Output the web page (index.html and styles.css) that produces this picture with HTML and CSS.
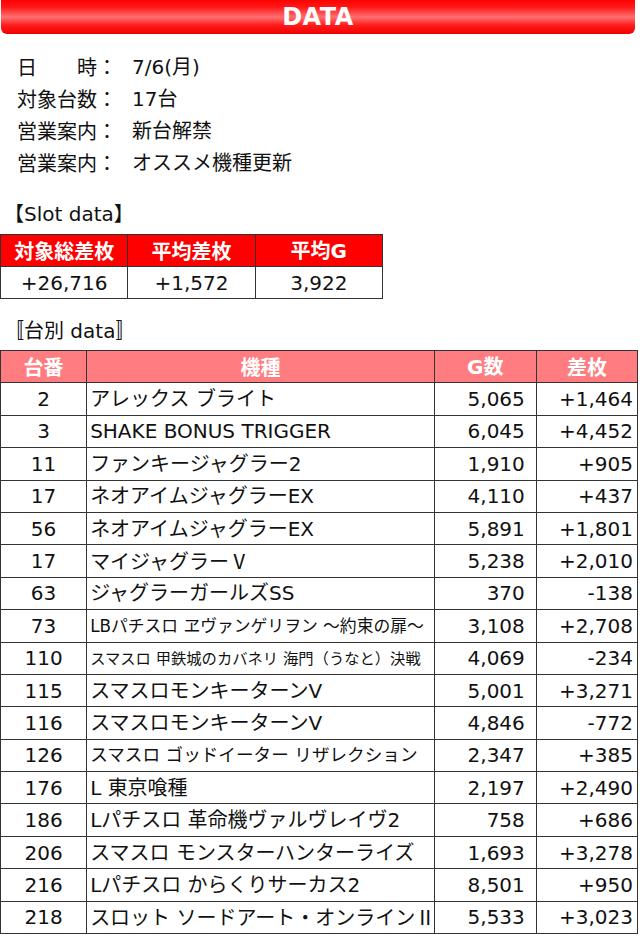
FILE: index.html
```
<!DOCTYPE html>
<html lang="ja">
<head>
<meta charset="utf-8">
<title>DATA</title>
<link rel="stylesheet" href="styles.css">
</head>
<body>
<div class="page">
  <div class="title-bar">DATA</div>

  <div class="info">
    <div class="info-label">日　　時：</div><div class="info-value">7/6(月)</div>
    <div class="info-label">対象台数：</div><div class="info-value">17台</div>
    <div class="info-label">営業案内：</div><div class="info-value">新台解禁</div>
    <div class="info-label">営業案内：</div><div class="info-value">オススメ機種更新</div>
  </div>

  <div class="section-label"><span class="cjk">【</span>Slot data<span class="cjk">】</span></div>
  <table class="slot">
    <tr class="slot-head"><th>対象総差枚</th><th>平均差枚</th><th>平均G</th></tr>
    <tr><td>+26,716</td><td>+1,572</td><td>3,922</td></tr>
  </table>

  <div class="section-label label2"><span class="cjk">〚</span>台別 data<span class="cjk">〛</span></div>
  <table class="units">
    <colgroup>
      <col class="c-no"><col class="c-name"><col class="c-g"><col class="c-diff">
    </colgroup>
    <tr class="units-head"><th>台番</th><th>機種</th><th>G数</th><th>差枚</th></tr>
    <tr><td class="no">2</td><td class="name">アレックス ブライト</td><td class="g">5,065</td><td class="diff">+1,464</td></tr>
    <tr><td class="no">3</td><td class="name">SHAKE BONUS TRIGGER</td><td class="g">6,045</td><td class="diff">+4,452</td></tr>
    <tr><td class="no">11</td><td class="name">ファンキージャグラー2</td><td class="g">1,910</td><td class="diff">+905</td></tr>
    <tr><td class="no">17</td><td class="name">ネオアイムジャグラーEX</td><td class="g">4,110</td><td class="diff">+437</td></tr>
    <tr><td class="no">56</td><td class="name">ネオアイムジャグラーEX</td><td class="g">5,891</td><td class="diff">+1,801</td></tr>
    <tr><td class="no">17</td><td class="name">マイジャグラー<span class="cjk">Ⅴ</span></td><td class="g">5,238</td><td class="diff">+2,010</td></tr>
    <tr><td class="no">63</td><td class="name">ジャグラーガールズSS</td><td class="g">370</td><td class="diff">-138</td></tr>
    <tr><td class="no">73</td><td class="name sm1">LBパチスロ ヱヴァンゲリヲン <span class="cjk">～</span>約束の扉<span class="cjk">～</span></td><td class="g">3,108</td><td class="diff">+2,708</td></tr>
    <tr><td class="no">110</td><td class="name sm2">スマスロ 甲鉄城のカバネリ 海門<span class="cjk">（</span>うなと<span class="cjk">）</span>決戦</td><td class="g">4,069</td><td class="diff">-234</td></tr>
    <tr><td class="no">115</td><td class="name">スマスロモンキーターンV</td><td class="g">5,001</td><td class="diff">+3,271</td></tr>
    <tr><td class="no">116</td><td class="name">スマスロモンキーターンV</td><td class="g">4,846</td><td class="diff">-772</td></tr>
    <tr><td class="no">126</td><td class="name sm3">スマスロ ゴッドイーター リザレクション</td><td class="g">2,347</td><td class="diff">+385</td></tr>
    <tr><td class="no">176</td><td class="name">L 東京喰種</td><td class="g">2,197</td><td class="diff">+2,490</td></tr>
    <tr><td class="no">186</td><td class="name">Lパチスロ 革命機ヴァルヴレイヴ2</td><td class="g">758</td><td class="diff">+686</td></tr>
    <tr><td class="no">206</td><td class="name">スマスロ モンスターハンターライズ</td><td class="g">1,693</td><td class="diff">+3,278</td></tr>
    <tr><td class="no">216</td><td class="name">Lパチスロ からくりサーカス2</td><td class="g">8,501</td><td class="diff">+950</td></tr>
    <tr><td class="no">218</td><td class="name">スロット ソードアート<span class="cjk">・</span>オンライン<span class="cjk">Ⅱ</span></td><td class="g">5,533</td><td class="diff">+3,023</td></tr>
  </table>
</div>
</body>
</html>
```

FILE: styles.css
```
html, body {
  margin: 0;
  padding: 0;
  background: #ffffff;
}

body {
  font-family: "DejaVu Sans", "Noto Sans CJK JP", sans-serif;
  color: #111111;
  font-size: 20px;
}

.cjk {
  font-family: "Noto Sans CJK JP", sans-serif;
}

.page {
  width: 640px;
}

.title-bar {
  margin: 0 5px 0 1px;
  height: 34px;
  line-height: 34px;
  border-radius: 0 0 6px 6px;
  background: linear-gradient(to bottom, #ff0000 0%, #ff1a1a 22%, #ff7070 50%, #ff1a1a 75%, #f00000 100%);
  color: #ffffff;
  text-align: center;
  font-weight: bold;
  font-size: 24px;
  letter-spacing: 0.5px;
}

.info {
  margin-top: 17px;
  padding-left: 17px;
  display: grid;
  grid-template-columns: 115px 1fr;
  line-height: 32px;
}

.info-label,
.info-value {
  height: 32px;
  font-family: "Noto Sans CJK JP", sans-serif;
}

.info-value {
  font-family: "DejaVu Sans", "Noto Sans CJK JP", sans-serif;
}

.section-label {
  margin-top: 18px;
  padding-left: 4px;
  height: 32px;
  line-height: 32px;
}

.label2 {
  margin-top: 15px;
}

table {
  border-collapse: collapse;
  margin-top: 5px;
}

.slot {
  width: 383px;
  table-layout: fixed;
}

.slot th,
.slot td {
  border: 1px solid #333333;
  height: 31px;
  padding: 0;
  text-align: center;
  vertical-align: middle;
  line-height: 1;
}

.slot-head th {
  background: #ff0000;
  color: #ffffff;
  font-weight: bold;
  font-family: "Noto Sans CJK JP", sans-serif;
}

.slot-head th:nth-child(3) {
  font-family: "DejaVu Sans", "Noto Sans CJK JP", sans-serif;
}

.units {
  width: 638px;
  table-layout: fixed;
  margin-top: 4px;
}

.c-no { width: 86px; }
.c-name { width: 347px; }
.c-g { width: 102px; }
.c-diff { width: 101px; }

.units th,
.units td {
  border: 1px solid #333333;
  height: 31.4px;
  padding: 0;
  vertical-align: middle;
  line-height: 1;
  white-space: nowrap;
  overflow: hidden;
}

.units-head th {
  background: #ff7c80;
  color: #ffffff;
  font-weight: bold;
  text-align: center;
  font-family: "Noto Sans CJK JP", sans-serif;
}

.units-head th:nth-child(3) {
  font-family: "DejaVu Sans", "Noto Sans CJK JP", sans-serif;
}

.no {
  text-align: center;
}

.name {
  text-align: left;
  padding-left: 3px !important;
}

.g {
  text-align: right;
  padding-right: 11px !important;
}

.diff {
  text-align: right;
  padding-right: 4px !important;
}

.sm1 { font-size: 16.8px; }
.sm2 { font-size: 15.3px; }
.sm3 { font-size: 17.6px; }
```
